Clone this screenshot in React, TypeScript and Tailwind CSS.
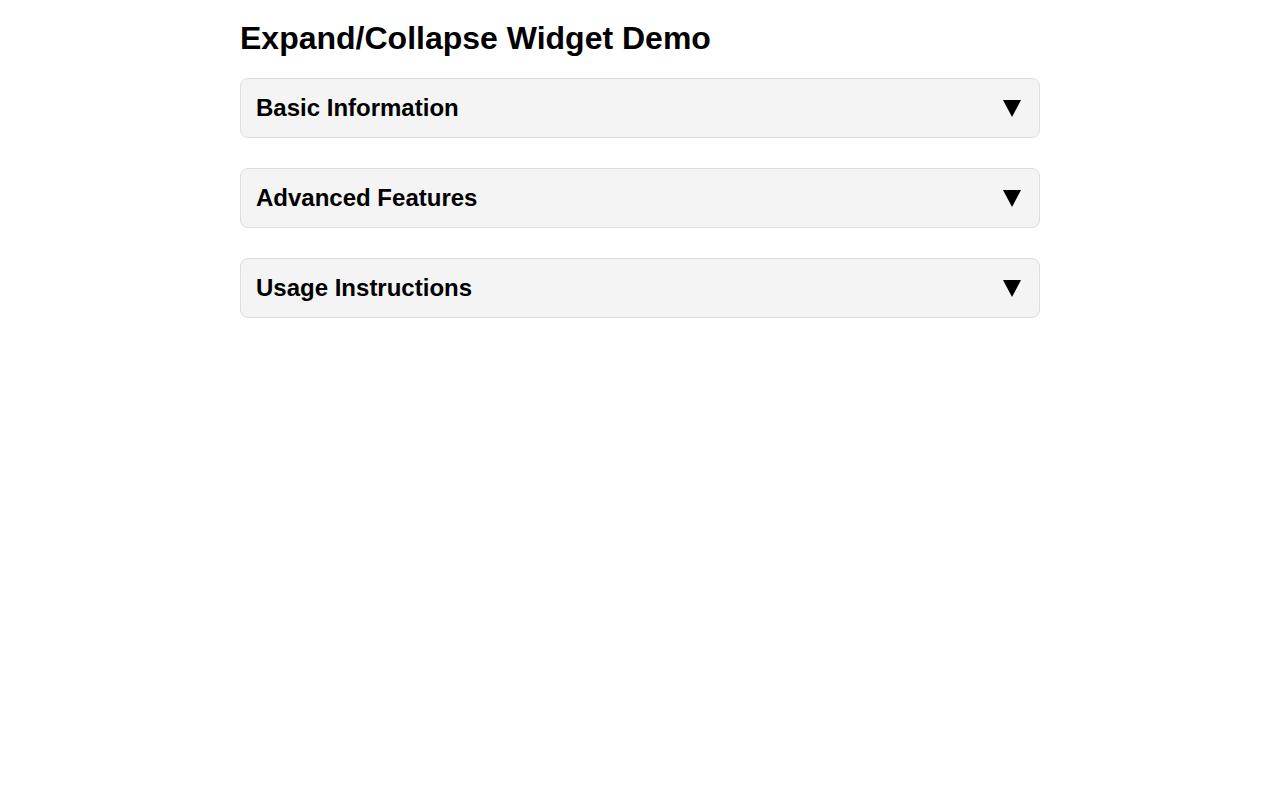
import React, { useState } from "react";

const sections = [
  { title: "Basic Information", body: "This section contains basic information about the widget." },
  { title: "Advanced Features", body: "This section describes advanced features." },
  { title: "Usage Instructions", body: "This section explains how to use the widget." },
];

export default function App() {
  const [open, setOpen] = useState<number | null>(null);
  return (
    <div className="min-h-screen bg-white text-black" style={{ fontFamily: '"Liberation Sans", Arial, sans-serif' }}>
      <div className="mx-auto w-[800px] pt-5">
        <h1 className="m-0 text-[32px] font-bold leading-[37px]">Expand/Collapse Widget Demo</h1>
        <div className="mt-[21px] flex flex-col gap-[30px]">
          {sections.map((s, i) => (
            <div key={s.title} className="rounded-lg border border-[#dddddd] bg-[#f4f4f4]">
              <button
                type="button"
                onClick={() => setOpen(open === i ? null : i)}
                className="flex w-full items-center justify-between py-[15px] pl-[15px] pr-[18px] text-left"
              >
                <span className="text-[24px] font-bold leading-[28px]">{s.title}</span>
                <svg width="18" height="17" viewBox="0 0 18 17" aria-label="▼">
                  <polygon points="0,0 18,0 9,17" fill="#000" />
                </svg>
              </button>
              {open === i && <div className="px-[15px] pb-[15px] text-base">{s.body}</div>}
            </div>
          ))}
        </div>
      </div>
    </div>
  );
}
